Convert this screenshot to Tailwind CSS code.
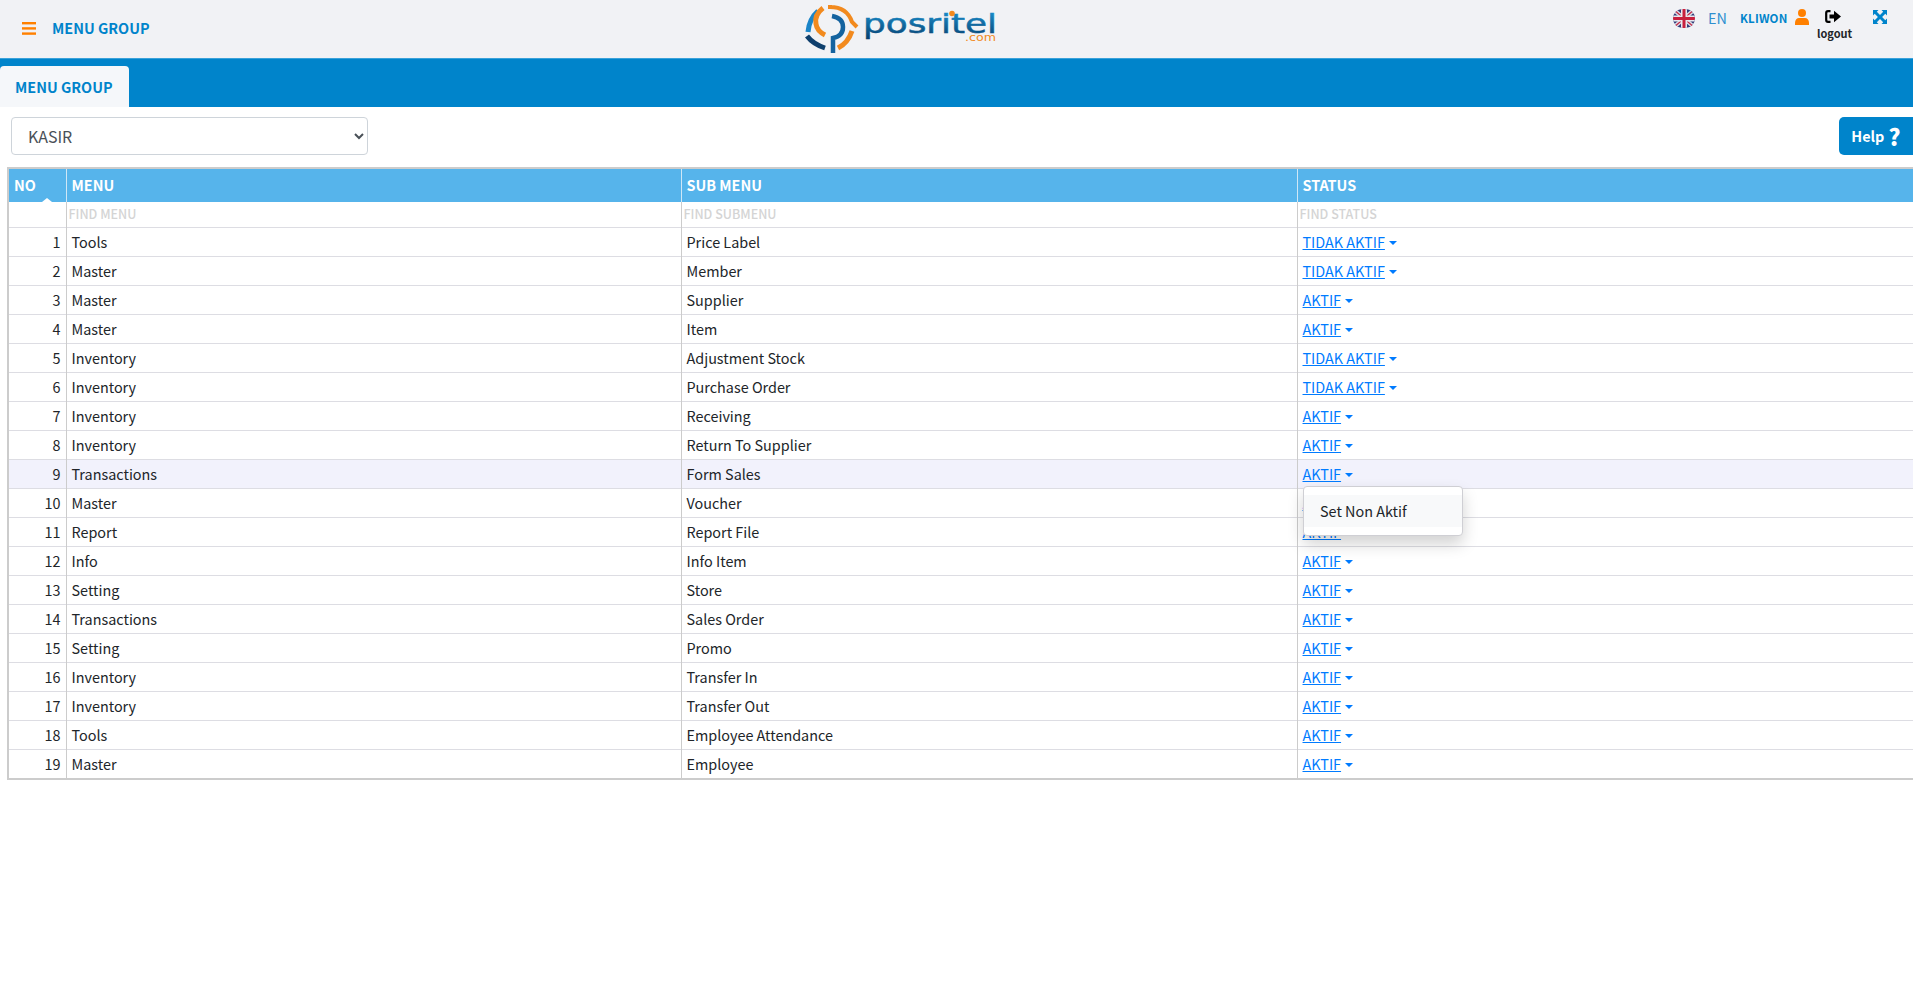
<!DOCTYPE html>
<html lang="en"><head><meta charset="utf-8"><title>Menu Group</title>
<script src="https://cdn.jsdelivr.net/npm/@tailwindcss/browser@4"></script></head>
<body class="bg-white h-[992px] w-[1913px] overflow-hidden font-['Noto_Sans_CJK_SC','Liberation_Sans',sans-serif] text-[14.4px] text-[#212529]">
<header class="h-[58px] bg-[#f1f2f5] flex items-start relative">
  <div class="flex items-center h-[57px] pl-[22px]">
    <svg class="w-[14px] h-[13px]" viewBox="0 0 14 13" fill="#ff8000"><rect y="0" width="14" height="2.4"/><rect y="5.2" width="14" height="2.4"/><rect y="10.4" width="14" height="2.4"/></svg>
    <span class="ml-[16px] font-bold text-[#0084cb] text-[14.4px] leading-none">MENU GROUP</span>
  </div>
  <svg class="absolute left-[800px] top-[0px] w-[200px] h-[56px]" viewBox="0 0 200 56">
    <defs><linearGradient id="g" x1="0" y1="0" x2="0" y2="1"><stop offset="0" stop-color="#1b98d8"/><stop offset="1" stop-color="#07406f"/></linearGradient></defs>
    <g fill="none" stroke-linecap="butt">
      <path d="M18 11Q9 19 8 32" stroke="#1b85c8" stroke-width="5"/>
      <path d="M7 36Q13 44 25 48" stroke="#0e3f6d" stroke-width="5"/>
      <path d="M30 5V7Q47 7 52 22L57 27" stroke="#f28a1e" stroke-width="4"/>
      <path d="M52 31Q48 43 38 48" stroke="#f28a1e" stroke-width="5"/>
      <path d="M23 8Q14 15 16 24Q17 31 25 35" stroke="#f28a1e" stroke-width="5"/>
      <path d="M32 16Q43 18 43 27Q43 36 33 38V53" stroke="#14639f" stroke-width="4.500"/>
    </g>
    <text x="63" y="33" font-family="DejaVu Sans, sans-serif" font-size="27" fill="url(#g)" stroke="url(#g)" stroke-width="0.5" textLength="134" lengthAdjust="spacingAndGlyphs">posritel</text>
    <circle cx="152" cy="13.500" r="2.800" fill="#f28a1e"/>
    <text x="165" y="41" font-family="DejaVu Sans, sans-serif" font-size="10" fill="#f28a1e" textLength="31" lengthAdjust="spacingAndGlyphs">.com</text>
  </svg>
  <div class="absolute left-[1673px] top-[9px] w-[22px] h-[19px] rounded-full overflow-hidden">
    <svg viewBox="0 0 22 19" class="w-full h-full"><rect width="22" height="19" fill="#2f3a78"/><path d="M0 0L22 19M22 0L0 19" stroke="#d9d9e2" stroke-width="4"/><path d="M0 0L22 19M22 0L0 19" stroke="#c8203e" stroke-width="1.200"/><rect x="8" width="6" height="19" fill="#e8e8ee"/><rect y="6.500" width="22" height="6" fill="#e8e8ee"/><rect x="9.500" width="3" height="19" fill="#c8203e"/><rect y="8" width="22" height="3" fill="#c8203e"/></svg>
  </div>
  <span class="absolute left-[1708px] top-[7px] text-[14.4px] leading-[22px] text-[#2e8fd0]">EN</span>
  <span class="absolute left-[1740px] top-[9px] text-[11.500px] leading-[19px] font-bold tracking-[0.2px] text-[#0084cb]">KLIWON</span>
  <svg class="absolute left-[1795px] top-[9px] w-[14px] h-[16px]" viewBox="0 0 14 16" fill="#ff8000"><circle cx="7" cy="4" r="4"/><path d="M0 16V13.500C0 10.800 2 9 4 9H10C12 9 14 10.800 14 13.500V16Z"/></svg>
  <svg class="absolute left-[1825px] top-[10px] w-[16px] h-[13px]" viewBox="0 0 16 13"><path d="M5.500 1.200H3C1.800 1.200 1.200 1.900 1.200 3V10C1.200 11.100 1.800 11.800 3 11.800H5.500" fill="none" stroke="#000" stroke-width="2.200"/><path d="M4.500 4.500H9V0.800L16 6.500L9 12.200V8.500H4.500Z" fill="#000"/></svg>
  <span class="absolute left-[1817px] top-[24px] text-[11px] leading-[18px] font-bold text-[#212529]">logout</span>
  <svg class="absolute left-[1873px] top-[10px] w-[14px] h-[14px]" viewBox="0 0 14 14" fill="#0084cb"><path d="M0 0H5.500L3.800 1.700L7 4.900L10.200 1.700L8.500 0H14V5.500L12.300 3.800L9.100 7L12.300 10.200L14 8.500V14H8.500L10.200 12.300L7 9.100L3.800 12.300L5.500 14H0V8.500L1.700 10.200L4.900 7L1.700 3.800L0 5.500Z"/></svg>
</header>
<nav class="h-[49px] bg-[#0084cb] border-t border-t-[#3aa2da] flex items-end">
  <div class="w-[129px] h-[41px] bg-[#f5f7fa] rounded-t-[4px] flex items-center pl-[15px] font-bold text-[#0084cb] text-[14.4px]">MENU GROUP</div>
</nav>
<section class="h-[60px] flex items-start justify-between pt-[10px]">
  <select class="ml-[11px] w-[357px] h-[38px] border border-[#ced4da] rounded-[4px] bg-white pl-[12px] text-[#495057] text-[16px]"><option>KASIR</option></select>
  <button class="w-[74px] h-[38px] bg-[#0084cb] rounded-l-[5px] text-white font-bold text-[14.4px] flex items-center justify-center gap-[4px]">Help <span class="text-[23px] leading-none font-black">?</span></button>
</section>
<div class="relative pl-[7px]">
<table class="w-[1906px] table-fixed border-collapse border-l-[2px] border-b-[2px] border-t-[2px] border-[#cccccc] text-[14.4px]">
  <colgroup><col class="w-[58px]"><col class="w-[615px]"><col class="w-[616px]"><col></colgroup>
  <thead>
    <tr class="h-[34px] bg-[#56b4eb] text-white font-bold text-left">
      <th class="relative pl-[5px] pb-[2px] border-r border-[#cfe7f6] font-bold">NO<span class="absolute left-[33px] bottom-0 w-0 h-0 border-x-[5px] border-x-transparent border-b-[4px] border-b-white"></span></th>
      <th class="pl-[5px] pb-[2px] border-r border-[#cfe7f6] font-bold">MENU</th>
      <th class="pl-[5px] pb-[2px] border-r border-[#cfe7f6] font-bold">SUB MENU</th>
      <th class="pl-[5px] pb-[2px] font-bold">STATUS</th>
    </tr>
    <tr class="h-[25px] text-[12.500px] font-medium text-[#d4d4d4] border-b border-[#dddde3]">
      <td class="border-r border-[#cccccc]"></td>
      <td class="pl-[2px] border-r border-[#cccccc]">FIND MENU</td>
      <td class="pl-[2px] border-r border-[#cccccc]">FIND SUBMENU</td>
      <td class="pl-[2px]">FIND STATUS</td>
    </tr>
  </thead>
  <tbody class="[&>tr]:h-[29px] [&>tr]:border-b [&>tr]:border-b-[#dddde3] [&>tr:last-child]:h-[30px] [&>tr:last-child]:border-b-0 [&_td:nth-child(1)]:text-right [&_td:nth-child(1)]:pr-[5px] [&_td:nth-child(-n+3)]:border-r [&_td:nth-child(-n+3)]:border-r-[#cccccc] [&_td:nth-child(n+2)]:pl-[5px] [&_a]:text-[#007bff] [&_a]:underline [&_svg]:inline-block [&_svg]:ml-[4px] [&_svg]:align-[3px]">
    <tr><td>1</td><td>Tools</td><td>Price Label</td><td><a href="#">TIDAK AKTIF</a><svg width="8" height="4" viewBox="0 0 8 4" fill="#007bff"><path d="M0 0H8L4 4Z"/></svg></td></tr>
    <tr><td>2</td><td>Master</td><td>Member</td><td><a href="#">TIDAK AKTIF</a><svg width="8" height="4" viewBox="0 0 8 4" fill="#007bff"><path d="M0 0H8L4 4Z"/></svg></td></tr>
    <tr><td>3</td><td>Master</td><td>Supplier</td><td><a href="#">AKTIF</a><svg width="8" height="4" viewBox="0 0 8 4" fill="#007bff"><path d="M0 0H8L4 4Z"/></svg></td></tr>
    <tr><td>4</td><td>Master</td><td>Item</td><td><a href="#">AKTIF</a><svg width="8" height="4" viewBox="0 0 8 4" fill="#007bff"><path d="M0 0H8L4 4Z"/></svg></td></tr>
    <tr><td>5</td><td>Inventory</td><td>Adjustment Stock</td><td><a href="#">TIDAK AKTIF</a><svg width="8" height="4" viewBox="0 0 8 4" fill="#007bff"><path d="M0 0H8L4 4Z"/></svg></td></tr>
    <tr><td>6</td><td>Inventory</td><td>Purchase Order</td><td><a href="#">TIDAK AKTIF</a><svg width="8" height="4" viewBox="0 0 8 4" fill="#007bff"><path d="M0 0H8L4 4Z"/></svg></td></tr>
    <tr><td>7</td><td>Inventory</td><td>Receiving</td><td><a href="#">AKTIF</a><svg width="8" height="4" viewBox="0 0 8 4" fill="#007bff"><path d="M0 0H8L4 4Z"/></svg></td></tr>
    <tr><td>8</td><td>Inventory</td><td>Return To Supplier</td><td><a href="#">AKTIF</a><svg width="8" height="4" viewBox="0 0 8 4" fill="#007bff"><path d="M0 0H8L4 4Z"/></svg></td></tr>
    <tr class="bg-[#f2f2fc]"><td>9</td><td>Transactions</td><td>Form Sales</td><td><a href="#">AKTIF</a><svg width="8" height="4" viewBox="0 0 8 4" fill="#007bff"><path d="M0 0H8L4 4Z"/></svg></td></tr>
    <tr><td>10</td><td>Master</td><td>Voucher</td><td><a href="#">AKTIF</a><svg width="8" height="4" viewBox="0 0 8 4" fill="#007bff"><path d="M0 0H8L4 4Z"/></svg></td></tr>
    <tr><td>11</td><td>Report</td><td>Report File</td><td><a href="#">AKTIF</a><svg width="8" height="4" viewBox="0 0 8 4" fill="#007bff"><path d="M0 0H8L4 4Z"/></svg></td></tr>
    <tr><td>12</td><td>Info</td><td>Info Item</td><td><a href="#">AKTIF</a><svg width="8" height="4" viewBox="0 0 8 4" fill="#007bff"><path d="M0 0H8L4 4Z"/></svg></td></tr>
    <tr><td>13</td><td>Setting</td><td>Store</td><td><a href="#">AKTIF</a><svg width="8" height="4" viewBox="0 0 8 4" fill="#007bff"><path d="M0 0H8L4 4Z"/></svg></td></tr>
    <tr><td>14</td><td>Transactions</td><td>Sales Order</td><td><a href="#">AKTIF</a><svg width="8" height="4" viewBox="0 0 8 4" fill="#007bff"><path d="M0 0H8L4 4Z"/></svg></td></tr>
    <tr><td>15</td><td>Setting</td><td>Promo</td><td><a href="#">AKTIF</a><svg width="8" height="4" viewBox="0 0 8 4" fill="#007bff"><path d="M0 0H8L4 4Z"/></svg></td></tr>
    <tr><td>16</td><td>Inventory</td><td>Transfer In</td><td><a href="#">AKTIF</a><svg width="8" height="4" viewBox="0 0 8 4" fill="#007bff"><path d="M0 0H8L4 4Z"/></svg></td></tr>
    <tr><td>17</td><td>Inventory</td><td>Transfer Out</td><td><a href="#">AKTIF</a><svg width="8" height="4" viewBox="0 0 8 4" fill="#007bff"><path d="M0 0H8L4 4Z"/></svg></td></tr>
    <tr><td>18</td><td>Tools</td><td>Employee Attendance</td><td><a href="#">AKTIF</a><svg width="8" height="4" viewBox="0 0 8 4" fill="#007bff"><path d="M0 0H8L4 4Z"/></svg></td></tr>
    <tr><td>19</td><td>Master</td><td>Employee</td><td><a href="#">AKTIF</a><svg width="8" height="4" viewBox="0 0 8 4" fill="#007bff"><path d="M0 0H8L4 4Z"/></svg></td></tr>
  </tbody>
</table>
<div class="absolute left-[1303px] top-[319px] w-[160px] h-[50px] bg-white border border-[#cfcfd4] rounded-[4px] shadow-[0_8px_16px_rgba(0,0,0,0.18)] py-[8px]">
  <div class="h-[32px] bg-[#f8f9fa] pl-[16px] flex items-center text-[#212529]">Set Non Aktif</div>
</div>
</div>
</body></html>
